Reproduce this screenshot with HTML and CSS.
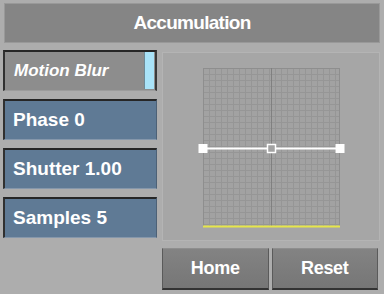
FILE: index.html
```html
<!DOCTYPE html>
<html lang="en">
  <head>
    <meta charset="utf-8" />
    <title>Accumulation</title>
    <link rel="stylesheet" href="styles.css">
  </head>
  <body>
    <header class="title-bar">Accumulation</header>

    <div class="layout">
      <div class="param-list">
        <button type="button" class="param toggle">Motion Blur<span class="led"></span></button>
        <button type="button" class="param">Phase 0</button>
        <button type="button" class="param">Shutter 1.00</button>
        <button type="button" class="param">Samples 5</button>
      </div>

      <div class="right-col">
        <div class="graph-panel">
          <svg class="graph" width="147" height="165" viewBox="0 0 147 165">
            <defs>
              <pattern id="fine" width="6" height="6" patternUnits="userSpaceOnUse" x="5" y="2">
                <rect width="6" height="6" fill="#a2a2a2" />
                <path d="M0 0.5H6M0.5 0V6" stroke="#969696" stroke-width="1" />
              </pattern>
            </defs>
            <rect x="5" y="2" width="137" height="159" fill="url(#fine)" />
            <rect x="5.5" y="2.5" width="136" height="158" fill="none" stroke="#8e8e8e" />
            <line x1="73.5" y1="2" x2="73.5" y2="161" stroke="#808080" />
            <line x1="5" y1="160.5" x2="142" y2="160.5" stroke="#e6e64a" stroke-width="2" />
            <line x1="5" y1="82.5" x2="142" y2="82.5" stroke="#ffffff" stroke-width="2" />
            <rect x="0.5" y="78" width="9" height="9" fill="#ffffff" />
            <rect x="137.5" y="78" width="9" height="9" fill="#ffffff" />
            <rect x="69.5" y="78.5" width="8" height="8" fill="#a2a2a2" stroke="#ffffff" stroke-width="1.5" />
          </svg>
        </div>
        <div class="action-row">
          <button type="button" class="action">Home</button>
          <button type="button" class="action">Reset</button>
        </div>
      </div>
    </div>
  </body>
</html>
```

FILE: styles.css
```css
* {
  margin: 0;
  padding: 0;
  box-sizing: border-box;
}

body {
  background: #adadad;
  font-family: 'Liberation Sans', Arial, sans-serif;
  color: #ffffff;
  width: 384px;
  height: 294px;
  padding: 3px 4px 0 3px;
  overflow: hidden;
}

.title-bar {
  margin-left: 1px;
  height: 40px;
  background: #858585;
  border: 1px solid #999999;
  display: flex;
  align-items: center;
  justify-content: center;
  font-size: 19px;
  font-weight: bold;
  letter-spacing: -0.7px;
}

.layout {
  display: grid;
  grid-template-columns: 154px 218px;
  gap: 5px;
  margin-top: 7px;
}

.param-list {
  display: flex;
  flex-direction: column;
  gap: 8px;
}

.param {
  position: relative;
  height: 41px;
  background: #5f7a95;
  border: none;
  border-top: 2px solid #262626;
  border-left: 2px solid #303030;
  border-right: 1px solid #4d6176;
  border-bottom: 1px solid #8597ab;
  color: #ffffff;
  font-family: 'Liberation Sans', Arial, sans-serif;
  font-size: 19px;
  font-weight: bold;
  text-align: left;
  padding-left: 8px;
}

.param.toggle {
  background: #8d8d8d;
  border-right: 2px solid #3a3a3a;
  border-bottom: 1px solid #9c9c9c;
  font-style: italic;
  font-size: 17px;
  padding-left: 9px;
}

.led {
  position: absolute;
  top: 0;
  right: 1px;
  width: 10px;
  height: 37px;
  background: #a9e3f8;
  border-left: 1px solid #6f8a96;
}

.right-col {
  display: flex;
  flex-direction: column;
  gap: 7px;
  padding-top: 2px;
}

.graph-panel {
  height: 189px;
  background: #a6a6a6;
  border: 1px solid #b4b4b4;
  padding: 13px 0 0 35px;
}

.graph {
  display: block;
}

.action-row {
  display: flex;
  gap: 3px;
  width: 216px;
}

.action {
  flex: 1;
  height: 42px;
  background: linear-gradient(#838383, #767676);
  border: none;
  border-top: 1px solid #8e8e8e;
  border-left: 1px solid #5a5a5a;
  border-right: 1px solid #5a5a5a;
  border-bottom: 2px solid #333333;
  color: #ffffff;
  font-family: 'Liberation Sans', Arial, sans-serif;
  font-size: 18px;
  font-weight: bold;
  letter-spacing: -0.3px;
}
```
